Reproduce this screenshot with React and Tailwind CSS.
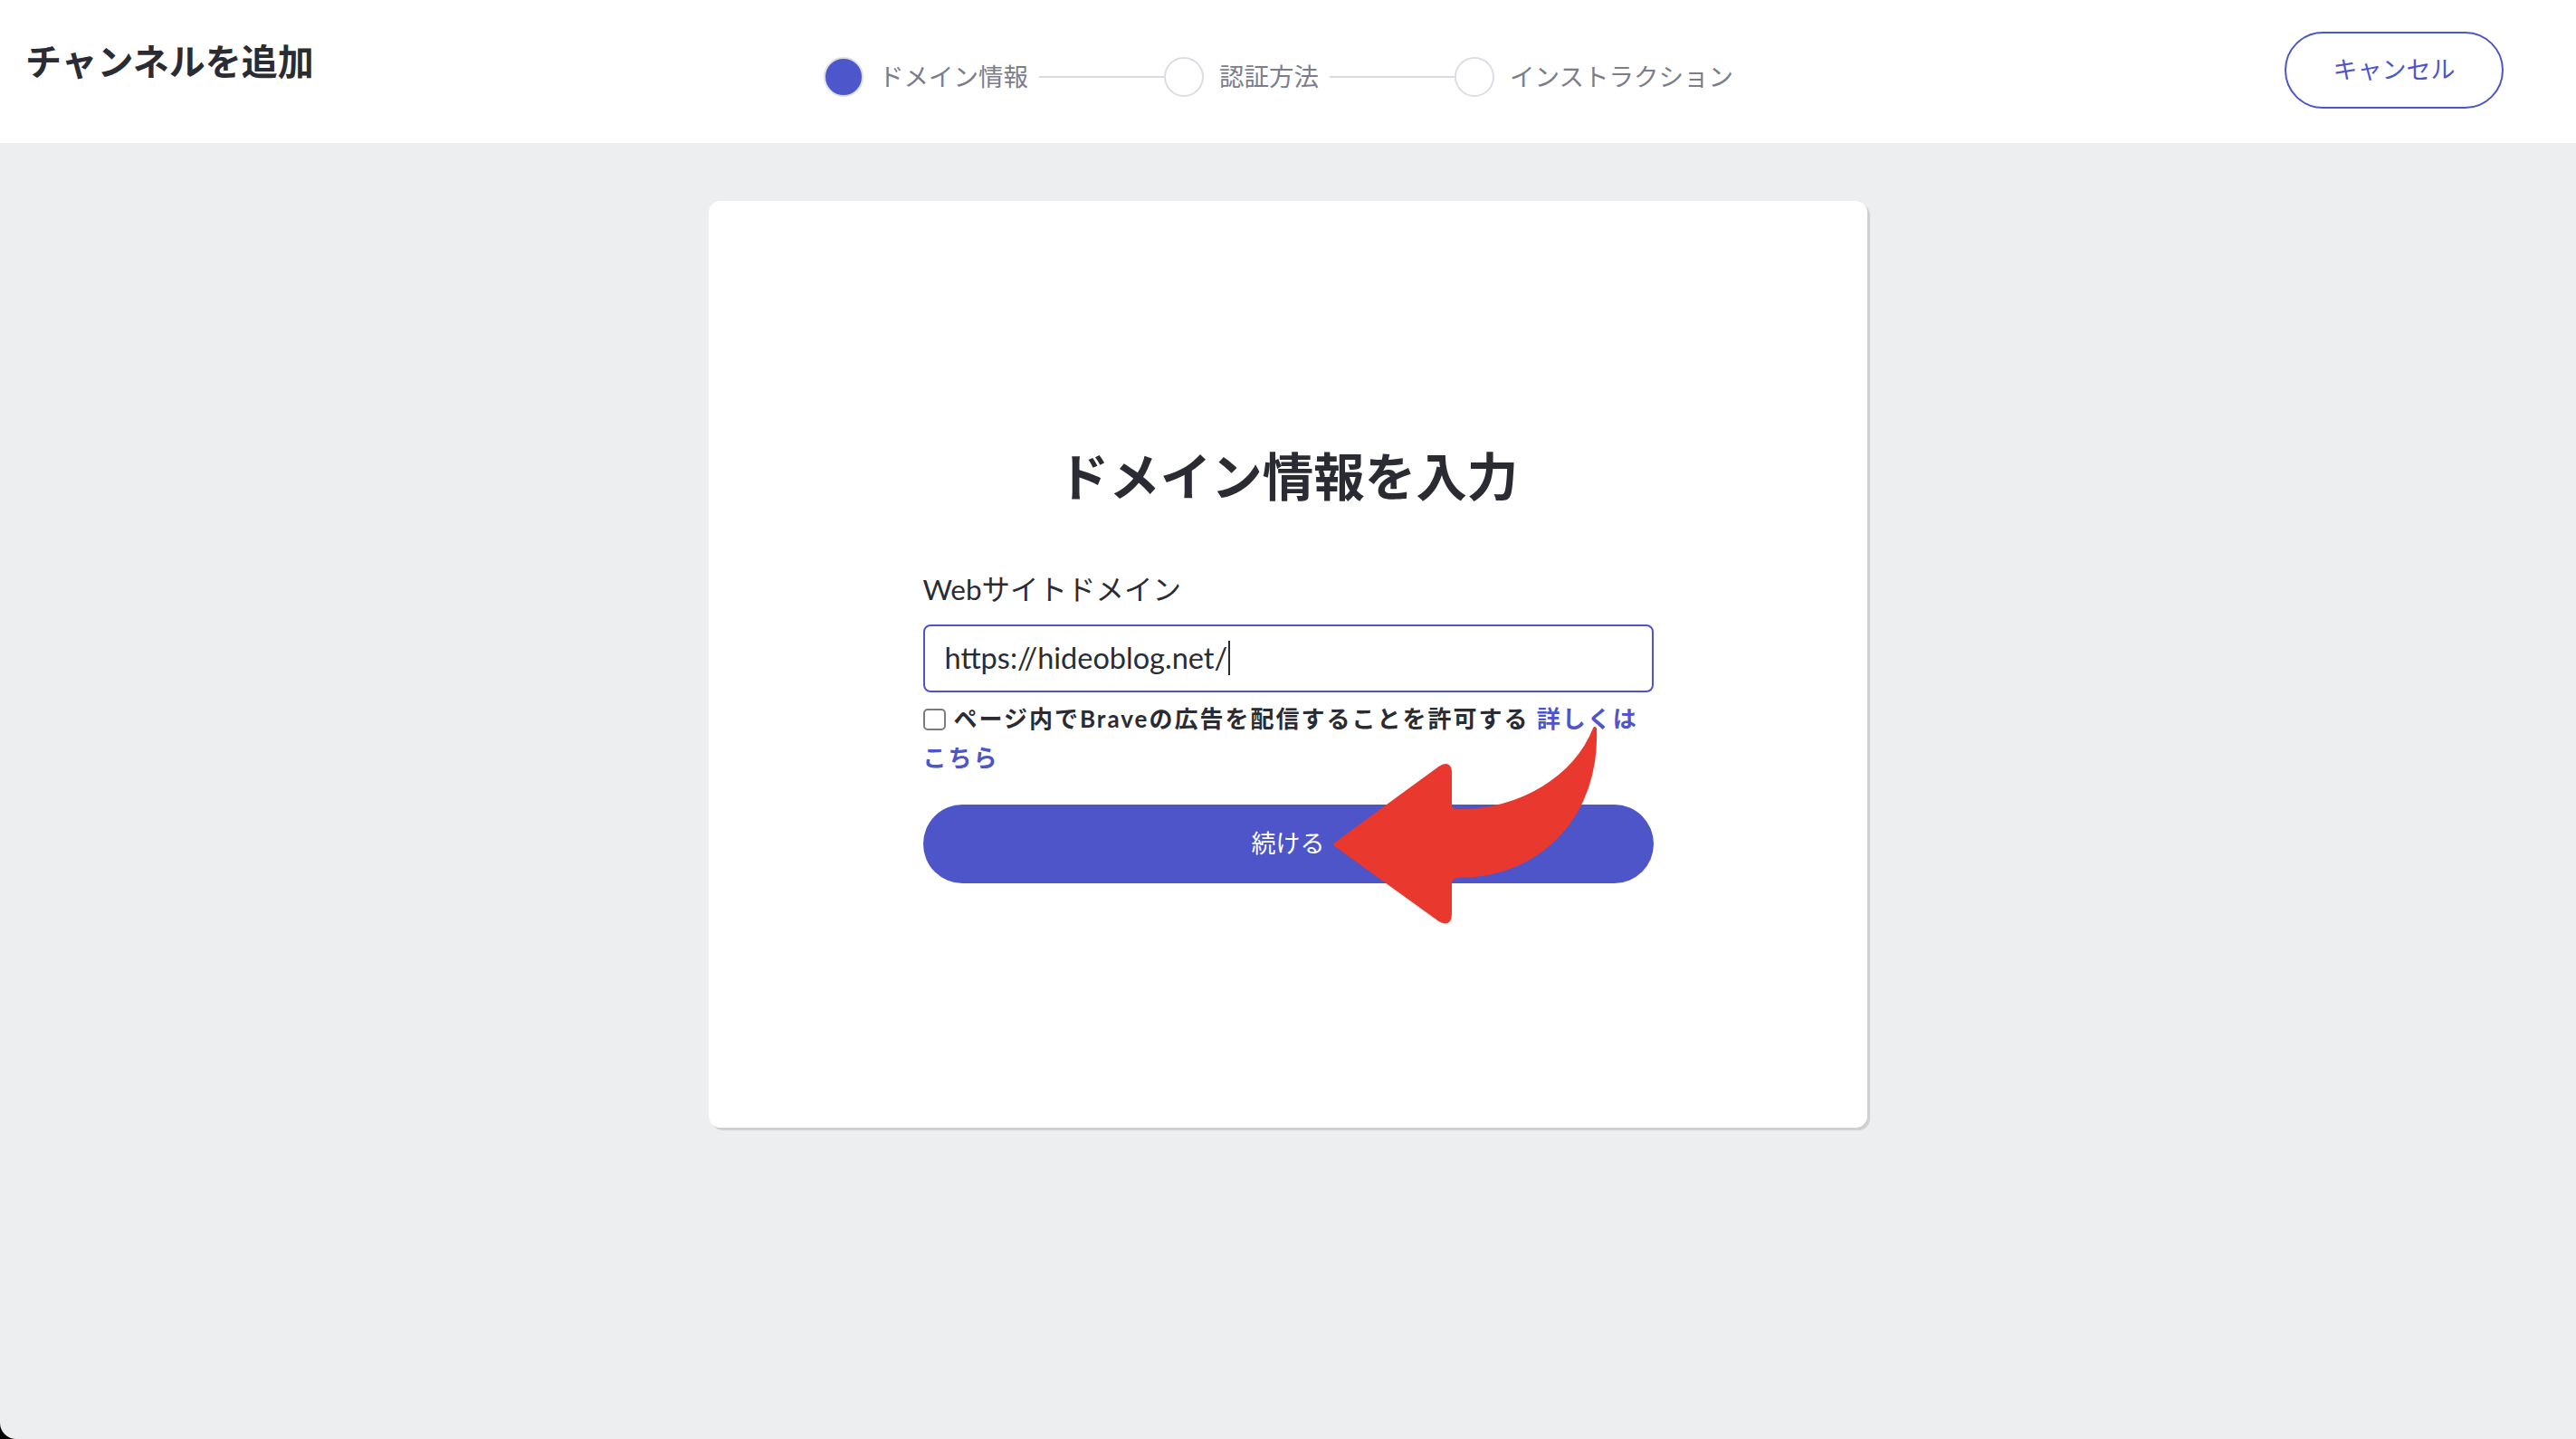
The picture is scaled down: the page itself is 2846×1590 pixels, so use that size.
import React from 'react';

const steps = [
  { label: 'ドメイン情報', active: true },
  { label: '認証方法', active: false },
  { label: 'インストラクション', active: false },
];

function Stepper() {
  return (
    <nav className="flex items-center h-[44px]">
      {steps.map((step, i) => (
        <div key={step.label} className="flex items-center">
          <span
            className={
              step.active
                ? 'w-[44px] h-[44px] rounded-full bg-[#4e56cc] border-2 border-[#dcdde3]'
                : 'w-[44px] h-[44px] rounded-full bg-white border-2 border-[#dcdde3]'
            }
          />
          <span className="ml-[17px] text-[27.5px] leading-[44px] text-[#7c7d8b]">{step.label}</span>
          {i < steps.length - 1 && <span className="ml-[12px] w-[138px] h-[2px] bg-[#dadbe0]" />}
        </div>
      ))}
    </nav>
  );
}

function App() {
  return (
    <div className="relative w-[2846px] h-[1590px] bg-black overflow-hidden font-['Lato','Noto_Sans_CJK_JP',sans-serif]">
      <div className="h-full bg-[#edeef0] rounded-bl-[18px] flex flex-col">
        {/* top bar */}
        <header className="h-[158px] shrink-0 bg-white flex items-start">
          <div className="w-[910px] shrink-0 pl-[28px] pt-[44px]">
            <h1 className="text-[40px] leading-[48px] font-bold text-[#2b2c33]">チャンネルを追加</h1>
          </div>
          <div className="pt-[63px]">
            <Stepper />
          </div>
          <button className="ml-auto mr-[80px] mt-[35px] w-[242px] h-[85px] rounded-full border-2 border-[#4c55c9] bg-white text-[27px] text-[#4c55c9]">
            キャンセル
          </button>
        </header>

        <main className="flex-1">
          <div className="mt-[64px] mx-auto w-[1280px] h-[1024px] bg-white rounded-[13px] shadow-[3px_3px_1px_rgba(0,0,0,0.13)] flex flex-col items-center justify-center">
            <div className="w-[807px] flex flex-col">
              <h2 className="text-center text-[56.5px] leading-[66px] font-bold text-[#2b2c33]">ドメイン情報を入力</h2>

              <label className="mt-[69px] text-[31.5px] leading-[46px] text-[#2b2c33]">Webサイトドメイン</label>

              <div className="mt-[16px] h-[75px] border-2 border-[#4c55c9] rounded-[8px] pl-[22px] flex items-center text-[32.5px] text-[#2b2c33]">
                <span>https://hideoblog.net/</span>
                <span className="ml-[1px] w-[2px] h-[38px] bg-[#2b2c33]" />
              </div>

              <p className="mt-[8px] text-[26px] leading-[43px] font-bold tracking-[2px] text-[#2b2c33]">
                <span className="inline-block align-[-3px] w-[25px] h-[24px] border-2 border-[#7b7b7b] rounded-[5px] mr-[9px] bg-white" />
                ページ内でBraveの広告を配信することを許可する{' '}
                <a className="text-[#4c55c9]">
                  詳しくは
                  <br />
                  こちら
                </a>
              </p>

              <button className="mt-[30px] h-[87px] rounded-full bg-[#4d55c9] text-white text-[27px]">続ける</button>
            </div>
          </div>
        </main>
      </div>

      {/* red annotation arrow */}
      <svg className="absolute left-0 top-0 pointer-events-none" width="2846" height="1590" viewBox="0 0 2846 1590">
        <path
          d="M1475 933 L1590 849 Q1602 841 1602 854 L1602 889 Q1602 896 1611 896 C1680 896 1740 860 1762 805 C1766 900 1702 968 1611 968 Q1602 968 1602 976 L1602 1010 Q1602 1023 1590 1016 Z"
          fill="#e9382e"
          stroke="#e9382e"
          strokeWidth="4"
          strokeLinejoin="round"
        />
      </svg>
    </div>
  );
}

export default App;
